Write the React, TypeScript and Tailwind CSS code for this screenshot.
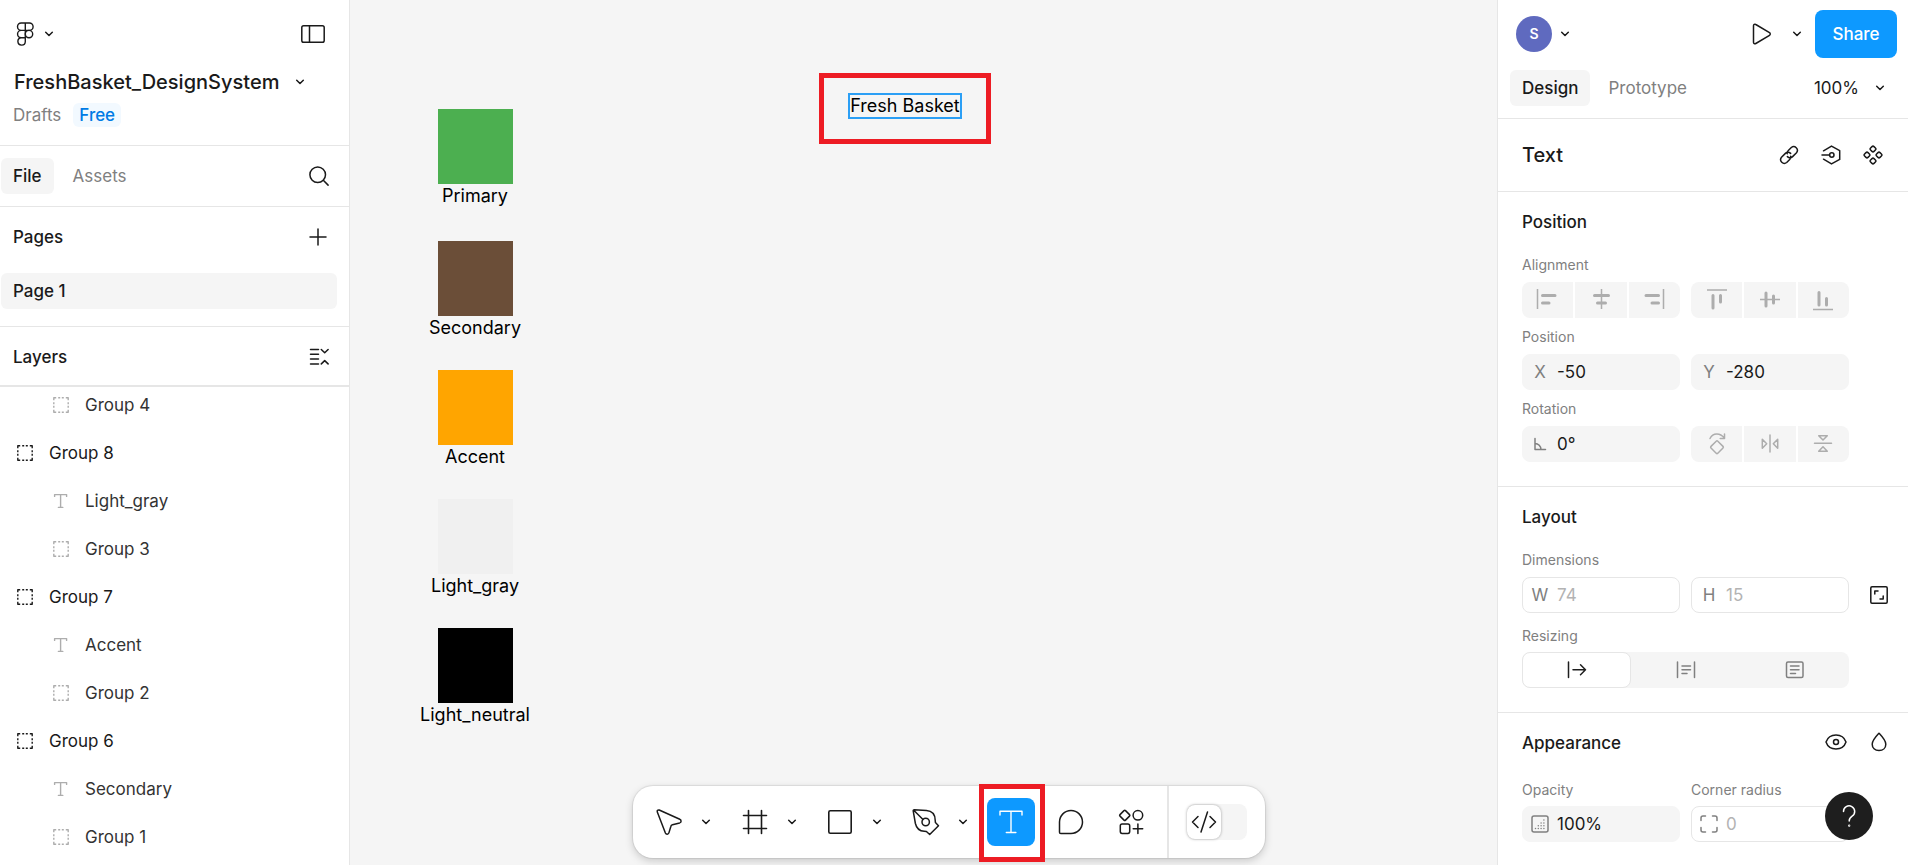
import React from "react";

type IconProps = {
  w: number;
  h: number;
  sw?: number;
  className?: string;
  children: React.ReactNode;
};

function Icon({ w, h, sw = 1.5, className, children }: IconProps) {
  return (
    <svg
      width={w}
      height={h}
      viewBox={`0 0 ${w} ${h}`}
      fill="none"
      stroke="currentColor"
      strokeWidth={sw}
      strokeLinecap="round"
      strokeLinejoin="round"
      className={className}
      aria-hidden="true"
    >
      {children}
    </svg>
  );
}

function Chevron() {
  return (
    <Icon w={10} h={8}>
      <path d="M1.7 2.2 5 5.5l3.3-3.3" />
    </Icon>
  );
}

function GroupIcon() {
  return (
    <Icon w={16} h={16} sw={1.4}>
      <path
        strokeLinecap="butt"
        d="M.8 3.2V.8h2.4M5.2.8h2M8.8.8h2M12.8.8h2.4v2.4M15.2 5.2v2M15.2 8.8v2M15.2 12.8v2.4h-2.4M10.8 15.2h-2M7.2 15.2h-2M3.2 15.2H.8v-2.4M.8 10.8v-2M.8 7.2v-2"
      />
    </Icon>
  );
}

function TextLayerIcon() {
  return (
    <Icon w={16} h={16} sw={1.4}>
      <path d="M1.6 3.4V1.6h12v1.8M7.6 1.6v12.8M5.4 14.4h4.4" />
    </Icon>
  );
}

type Layer = { name: string; kind: "group" | "text"; child: boolean };

const layers: Layer[] = [
  { name: "Group 4", kind: "group", child: true },
  { name: "Group 8", kind: "group", child: false },
  { name: "Light_gray", kind: "text", child: true },
  { name: "Group 3", kind: "group", child: true },
  { name: "Group 7", kind: "group", child: false },
  { name: "Accent", kind: "text", child: true },
  { name: "Group 2", kind: "group", child: true },
  { name: "Group 6", kind: "group", child: false },
  { name: "Secondary", kind: "text", child: true },
  { name: "Group 1", kind: "group", child: true },
];

function LeftPanel() {
  return (
    <aside className="flex w-[350px] shrink-0 flex-col border-r border-[#e6e6e6] bg-white">
      <header className="flex h-[146px] flex-col border-b border-[#e6e6e6]">
        <div className="flex h-[66px] items-center justify-between pt-0.5 pr-6 pl-4">
          <button className="flex items-center gap-2.5" aria-label="Main menu">
            <Icon w={18} h={24} sw={1.4}>
              <path d="M9.3 1H5.2a3.7 3.7 0 0 0 0 7.4h4.1zM9.3 1h4.1a3.7 3.7 0 0 1 0 7.4H9.3zM9.3 8.4H5.2a3.6 3.6 0 0 0 0 7.3h4.1zM5.2 15.7a3.7 3.7 0 1 0 4.1 3.7v-3.7z" />
              <circle cx="13" cy="12.1" r="3.7" />
            </Icon>
            <Chevron />
          </button>
          <button aria-label="Toggle sidebar">
            <Icon w={24} h={18}>
              <rect x=".8" y=".8" width="22.4" height="16.4" rx="1.8" />
              <path d="M8.5 1v16" />
            </Icon>
          </button>
        </div>
        <button className="flex h-8 items-center justify-between pr-[44px] pl-3.5 text-[20px] font-medium">
          FreshBasket_DesignSystem
          <Chevron />
        </button>
        <div className="flex h-[34px] items-center gap-3 pl-[13px] text-[#808080]">
          <span>Drafts</span>
          <span className="rounded-md bg-[#f2f9ff] px-1.5 font-medium text-[#007be5]">Free</span>
        </div>
      </header>

      <nav className="flex h-[61px] items-center border-b border-[#e6e6e6] pr-5 pl-px">
        <button className="h-9 rounded-md bg-[#f5f5f5] px-3 font-medium">File</button>
        <button className="h-9 px-[19px] text-[#808080]">Assets</button>
        <button className="ml-auto" aria-label="Search">
          <Icon w={20} h={20}>
            <circle cx="8.7" cy="8.7" r="7.8" />
            <path d="m14.3 14.3 4.8 4.8" />
          </Icon>
        </button>
      </nav>

      <section className="border-b border-[#e6e6e6] pb-[17px]">
        <div className="mb-1.5 flex h-[60px] items-center justify-between pr-[22px] pl-[13px]">
          <h2 className="font-medium">Pages</h2>
          <button aria-label="Add page">
            <Icon w={18} h={18}>
              <path d="M9 1v16M1 9h16" />
            </Icon>
          </button>
        </div>
        <button className="ml-px flex h-9 w-[336px] items-center rounded-md bg-[#f5f5f5] px-3 font-medium">
          Page 1
        </button>
      </section>

      <div className="flex h-[60px] shrink-0 items-center justify-between border-b-2 border-[#e6e6e6] pt-0.5 pr-5 pl-[13px]">
        <h2 className="font-medium">Layers</h2>
        <button aria-label="Collapse layers">
          <Icon w={20} h={18}>
            <path d="M1.5 1.5h8M1.5 6.3h8M1.5 11.1h8M1.5 15.9h8M12.3 1.5l3.4 3.3 3.4-3.3M12.3 15.9l3.4-3.3 3.4 3.3" />
          </Icon>
        </button>
      </div>

      <div className="min-h-0 flex-1 overflow-hidden">
        <ul className="-mt-1.5">
          {layers.map((l) => (
            <li
              key={l.name}
              className={
                l.child
                  ? "flex h-12 items-center gap-4 pl-[53px] text-[#333]"
                  : "flex h-12 items-center gap-4 pl-[17px]"
              }
            >
              <span className={l.child ? "text-[#adadad]" : ""}>
                {l.kind === "group" ? <GroupIcon /> : <TextLayerIcon />}
              </span>
              {l.name}
            </li>
          ))}
        </ul>
      </div>
    </aside>
  );
}

const swatches = [
  { name: "Primary", place: "top-[109px]", color: "bg-[#4caf50]" },
  { name: "Secondary", place: "top-[241px]", color: "bg-[#6b4e38]" },
  { name: "Accent", place: "top-[370px]", color: "bg-[#ffa500]" },
  { name: "Light_gray", place: "top-[499px]", color: "bg-[#f0f0f0]" },
  { name: "Light_neutral", place: "top-[628px]", color: "bg-black" },
];

const splitTools = [
  {
    name: "Move",
    icon: (
      <Icon w={28} h={28}>
        <path d="M2.3 3.9 10.4 25c.7 1.7 3 1.6 3.5-.1l2-6.6c.2-.8.8-1.4 1.6-1.6l7.2-1.8c1.8-.5 1.8-3 .1-3.6L4.2 2C2.9 1.6 1.8 2.700 2.300 3.900Z" />
      </Icon>
    ),
  },
  {
    name: "Frame",
    icon: (
      <Icon w={28} h={28} sw={1.6}>
        <path d="M7.5 2.5v23M20.5 2.5v23M2.5 7.5h23M2.5 20.5h23" />
      </Icon>
    ),
  },
  {
    name: "Rectangle",
    icon: (
      <Icon w={28} h={28} sw={1.6}>
        <rect x="2.800" y="2.800" width="22.400" height="22.400" rx="1.500" />
      </Icon>
    ),
  },
  {
    name: "Pen",
    icon: (
      <Icon w={28} h={28}>
        <path d="M2.2 1.800 14.500 2.600c6 .5 8.600 4.500 8.700 9.700l.2 2.200 3.100 3.200-8.800 8.800-3.300-3-2.200-.2C7 23 4.500 20.300 3.400 15.500L1.200 2.800c-.1-.6.4-1 1-1ZM2 2.500l9 9" />
        <circle cx="13.7" cy="14" r="3.7" />
      </Icon>
    ),
  },
];

function Toolbar() {
  return (
    <div
      role="toolbar"
      aria-label="Tools"
      className="absolute bottom-[7px] left-[283px] flex h-[72px] items-center rounded-[20px] bg-white pl-3 shadow-[0_0_1px_1px_rgba(0,0,0,0.08),0_3px_8px_rgba(0,0,0,0.18)]"
    >
      <div className="grid w-[342px] grid-cols-4">
        {splitTools.map((t) => (
          <div key={t.name} className="flex items-center">
            <button className="grid size-12 place-items-center" aria-label={t.name}>
              {t.icon}
            </button>
            <button className="grid h-12 w-[26px] place-items-center" aria-label={`${t.name} options`}>
              <Chevron />
            </button>
          </div>
        ))}
      </div>
      <div className="flex items-center gap-3">
        <div className="relative">
          <button className="grid size-12 place-items-center rounded-lg bg-[#0d99ff] text-white" aria-label="Text">
            <Icon w={28} h={28} sw={1.4}>
              <path d="M3 7V3.2h22V7M14 3.2v21.3M9.300 24.500h9.600" />
            </Icon>
          </button>
          <div className="pointer-events-none absolute -top-3.5 -left-2 h-[78px] w-[66px] border-5 border-[#ed1c24]" />
        </div>
        <button className="grid size-12 place-items-center" aria-label="Comment">
          <Icon w={28} h={28}>
            <path d="M14 2.5A11.5 11.5 0 1 1 14 25.5H3.800c-.8 0-1.300-.5-1.300-1.300V14A11.500 11.500 0 0 1 14 2.500Z" />
          </Icon>
        </button>
        <button className="grid size-12 place-items-center" aria-label="Actions">
          <Icon w={28} h={28}>
            <path d="M7 2.600c.5-.5 1-.5 1.500 0l4 4c.5.5.5 1 0 1.500l-4 4c-.5.5-1 .5-1.500 0l-4-4c-.5-.5-.5-1 0-1.500zM20.900 16v9.500M16.200 20.700h9.500" />
            <circle cx="20.900" cy="7.300" r="4.800" />
            <rect x="3.300" y="16" width="9.400" height="9.400" rx="1.800" />
          </Icon>
        </button>
      </div>
      <div className="ml-3 flex h-full items-center border-l-2 border-[#e6e6e6] px-[18px]">
        <button className="flex h-9 w-[60px] items-center rounded-lg bg-[#f5f5f5]" aria-label="Dev mode">
          <span className="grid size-[34px] place-items-center rounded-lg bg-white shadow-[0_0_3px_rgba(0,0,0,0.35)]">
            <Icon w={26} h={24}>
              <path d="m7 6.500-5.500 5.500L7 17.500M19 6.500l5.500 5.500-5.500 5.500M16.500 2 10 22" />
            </Icon>
          </span>
        </button>
      </div>
    </div>
  );
}

function Canvas() {
  return (
    <main className="relative min-w-0 flex-1 overflow-hidden bg-[#f5f5f5]">
      {swatches.map((s) => (
        <figure key={s.name} className={`absolute left-[50px] flex w-[150px] flex-col items-center ${s.place}`}>
          <div className={`size-[75px] ${s.color}`} />
          <figcaption className="text-lg leading-6 text-black">{s.name}</figcaption>
        </figure>
      ))}
      <div className="absolute top-[73px] left-[469px] grid h-[71px] w-[172px] place-items-center border-5 border-[#ed1c24]">
        <span className="mb-1.5 border-2 border-[#2b9ff5] text-lg leading-[22px] text-black">Fresh Basket</span>
      </div>
      <Toolbar />
    </main>
  );
}

function Label({ children, tall }: { children: React.ReactNode; tall?: boolean }) {
  return (
    <div
      className={
        tall
          ? "flex h-[39px] items-center pt-1.5 text-sm text-[#808080]"
          : "flex h-9 items-center pt-0.5 text-sm text-[#808080]"
      }
    >
      {children}
    </div>
  );
}

function Row({ children, end }: { children: React.ReactNode; end?: React.ReactNode }) {
  return (
    <div className="flex items-center">
      <div className="grid flex-1 grid-cols-2 gap-[11px]">{children}</div>
      <div className="grid w-[59px] place-items-center">{end}</div>
    </div>
  );
}

function Segments({ items }: { items: { name: string; icon: React.ReactNode }[] }) {
  return (
    <div className="grid h-9 grid-cols-3 gap-0.5 overflow-hidden rounded-lg text-[#adadad]">
      {items.map((i) => (
        <button key={i.name} aria-label={i.name} className="grid place-items-center bg-[#f5f5f5]">
          {i.icon}
        </button>
      ))}
    </div>
  );
}

function Field({
  name,
  prefix,
  value,
  outlined,
}: {
  name: string;
  prefix: React.ReactNode;
  value: string;
  outlined?: boolean;
}) {
  return (
    <label
      className={
        outlined
          ? "flex h-9 items-center rounded-lg border border-[#e6e6e6] text-[#b3b3b3]"
          : "flex h-9 items-center rounded-lg border border-[#f5f5f5] bg-[#f5f5f5]"
      }
    >
      <span className="grid w-[34px] shrink-0 place-items-center text-[#808080]">{prefix}</span>
      <input aria-label={name} defaultValue={value} className="w-full min-w-0 bg-transparent outline-none" />
    </label>
  );
}

function AlignIcon({ line, bars }: { line: string; bars: string }) {
  return (
    <Icon w={24} h={24}>
      <path strokeLinecap="butt" d={line} />
      <path strokeWidth="3" d={bars} />
    </Icon>
  );
}

const horizontalAlign = [
  { name: "Align left", icon: <AlignIcon line="M1.5 1v20" bars="M6.5 7.5H19M6.5 15h6.5" /> },
  { name: "Align horizontal centers", icon: <AlignIcon line="M12.5 1v20" bars="M5.5 7.5h14M8.5 15h8" /> },
  { name: "Align right", icon: <AlignIcon line="M21.5 1v20" bars="M4 7.5h12.5M10 15h6.5" /> },
];

const verticalAlign = [
  { name: "Align top", icon: <AlignIcon line="M2 2h20" bars="M8 7.5V20M15.5 7.5V14" /> },
  { name: "Align vertical centers", icon: <AlignIcon line="M2 11.5h20" bars="M8 5v13M15.5 8v7" /> },
  { name: "Align bottom", icon: <AlignIcon line="M2 21.5h20" bars="M8 4.5v12.5M15.5 10.5V17" /> },
];

const transforms = [
  {
    name: "Rotate 90 degrees",
    icon: (
      <Icon w={24} h={24}>
        <path d="M5 6.500C8 .5 15 .5 19.300 6M19.500 2v4.500h-4.300M11.200 9.200c.5-.5 1.100-.5 1.600 0l5.200 5.200c.5.5.5 1.100 0 1.600l-5.200 5.200c-.5.5-1.100.5-1.600 0L6 16c-.5-.5-.5-1.100 0-1.600z" />
      </Icon>
    ),
  },
  {
    name: "Flip horizontal",
    icon: (
      <Icon w={24} h={24}>
        <path d="M12 3v17M4.300 7.300v9L8.700 11.800zM19.700 7.300v9L15.300 11.800z" />
      </Icon>
    ),
  },
  {
    name: "Flip vertical",
    icon: (
      <Icon w={24} h={24}>
        <path d="M3.500 11.300h17M7.700 3.700h8.600L12 8zM7.700 19.300h8.600L12 14.800z" />
      </Icon>
    ),
  },
];

function Section({ title, actions, children }: { title: string; actions?: React.ReactNode; children: React.ReactNode }) {
  return (
    <section className="border-b border-[#e6e6e6] pt-3 pb-6 pl-6">
      <div className="mb-1.5 flex h-9 items-center justify-between">
        <h2 className="font-medium">{title}</h2>
        {actions}
      </div>
      {children}
    </section>
  );
}

const componentDots = [
  { cx: 10, cy: 4 },
  { cx: 4, cy: 10 },
  { cx: 16, cy: 10 },
  { cx: 10, cy: 16 },
];

function RightPanel() {
  return (
    <aside className="flex w-[411px] shrink-0 flex-col overflow-hidden border-l border-[#e6e6e6] bg-white">
      <header className="shrink-0 border-b border-[#e6e6e6] pt-2.5 pb-3">
        <div className="flex h-12 items-center pr-[11px] pl-[18px]">
          <button className="flex items-center gap-2" aria-label="Account">
            <span className="grid size-9 place-items-center rounded-full bg-[#5f6abf] text-sm font-semibold text-white">
              S
            </span>
            <Chevron />
          </button>
          <button className="mr-5 ml-auto" aria-label="Present">
            <Icon w={20} h={22}>
              <path d="M1.5 2.800v16.400c0 1.300 1.200 2 2.300 1.300l13.700-8.200c1-.6 1-2 0-2.600L3.800 1.500C2.700.8 1.500 1.500 1.500 2.800Z" />
            </Icon>
          </button>
          <button className="mr-[13px]" aria-label="Present options">
            <Chevron />
          </button>
          <button className="h-12 w-[82px] rounded-lg bg-[#0d99ff] font-medium text-white">Share</button>
        </div>
        <div className="mt-3 flex h-9 items-center pr-[23px] pl-3">
          <button className="h-9 rounded-md bg-[#f5f5f5] px-3 font-medium">Design</button>
          <button className="h-9 px-[18px] text-[#808080]">Prototype</button>
          <button className="ml-auto flex items-center gap-4">
            100%
            <Chevron />
          </button>
        </div>
      </header>

      <div className="flex h-[73px] shrink-0 items-center justify-between border-b border-[#e6e6e6] pr-[25px] pl-6">
        <h1 className="text-[20px] font-medium">Text</h1>
        <div className="flex gap-[22px]">
          <button aria-label="Add link">
            <Icon w={20} h={20}>
              <path d="M8.400 11.600a3.700 3.700 0 0 0 5.200 0l3.900-3.900a3.700 3.700 0 0 0-5.200-5.200L9.300 5.500a3.600 3.600 0 0 0-1 3.200M11.600 8.400a3.700 3.700 0 0 0-5.200 0l-3.900 3.900a3.700 3.700 0 0 0 5.200 5.200l3-3a3.600 3.600 0 0 0 1-3.200" />
            </Icon>
          </button>
          <button aria-label="Variable mode">
            <Icon w={20} h={20}>
              <path d="M2.500 5.800 10.500 1.100l8.200 4.500v8.800l-8.200 4.500-8-4.700M1 10h7.500" />
              <circle cx="10.800" cy="10" r="2.200" />
            </Icon>
          </button>
          <button aria-label="Create component">
            <Icon w={20} h={20}>
              {componentDots.map((d) => (
                <rect
                  key={`${d.cx}-${d.cy}`}
                  x={d.cx - 2.4}
                  y={d.cy - 2.4}
                  width="4.8"
                  height="4.8"
                  rx="1.4"
                  transform={`rotate(45 ${d.cx} ${d.cy})`}
                />
              ))}
            </Icon>
          </button>
        </div>
      </div>

      <Section title="Position">
        <Label>Alignment</Label>
        <Row>
          <Segments items={horizontalAlign} />
          <Segments items={verticalAlign} />
        </Row>
        <Label>Position</Label>
        <Row>
          <Field name="X position" prefix="X" value="-50" />
          <Field name="Y position" prefix="Y" value="-280" />
        </Row>
        <Label>Rotation</Label>
        <Row>
          <Field
            name="Rotation"
            value="0°"
            prefix={
              <Icon w={14} h={14}>
                <path d="M2 1.500V12.500H12.500M2 6.500a6 6 0 0 1 6 6" />
              </Icon>
            }
          />
          <Segments items={transforms} />
        </Row>
      </Section>

      <Section title="Layout">
        <Label>Dimensions</Label>
        <Row
          end={
            <button aria-label="Lock aspect ratio">
              <Icon w={18} h={18}>
                <rect x=".8" y=".8" width="16.400" height="16.400" rx="1.200" />
                <path d="M4.800 8V5H8M13.200 10v3H10" />
              </Icon>
            </button>
          }
        >
          <Field name="Width" prefix="W" value="74" outlined />
          <Field name="Height" prefix="H" value="15" outlined />
        </Row>
        <Label tall>Resizing</Label>
        <div className="mr-[59px] grid h-9 grid-cols-3 rounded-lg bg-[#f5f5f5] text-[#808080]">
          <button
            aria-label="Auto width"
            className="grid place-items-center rounded-lg border border-[#e6e6e6] bg-white text-[#1e1e1e]"
          >
            <Icon w={20} h={18}>
              <path d="M1.500 1v15.500M6 8.800h12.500M13.500 3.800l5 5-5 5" />
            </Icon>
          </button>
          <button aria-label="Auto height" className="grid place-items-center">
            <Icon w={20} h={18}>
              <path d="M1.500 1v15.500M18.500 1v15.500M6 5h8.500M6 8.700h8.500M6 12.400h5" />
            </Icon>
          </button>
          <button aria-label="Fixed size" className="grid place-items-center">
            <Icon w={20} h={18}>
              <rect x="1.500" y="1" width="16.500" height="15.500" rx="1.500" />
              <path d="M5.500 5h8.500M5.500 8.700h8.500M5.500 12.400h5" />
            </Icon>
          </button>
        </div>
      </Section>

      <Section
        title="Appearance"
        actions={
          <div className="flex items-center gap-[23px] pr-5 pb-0.5">
            <button aria-label="Toggle visibility">
              <Icon w={22} h={16}>
                <path d="M1 8c1.500-4.300 5.200-7 10-7s8.500 2.700 10 7c-1.500 4.300-5.200 7-10 7S2.500 12.300 1 8Z" />
                <circle cx="11" cy="8" r="2.500" />
              </Icon>
            </button>
            <button aria-label="Blend mode">
              <Icon w={18} h={20}>
                <path d="M9 1.200c3 3.200 6.800 7.200 6.800 11 0 3.700-2.700 6.400-6.800 6.400s-6.800-2.700-6.800-6.400c0-3.800 3.800-7.800 6.800-11Z" />
              </Icon>
            </button>
          </div>
        }
      >
        <Row>
          <Label tall>Opacity</Label>
          <Label tall>Corner radius</Label>
        </Row>
        <Row>
          <Field
            name="Opacity"
            value="100%"
            prefix={
              <Icon w={18} h={18}>
                <rect x="1" y="1" width="16" height="16" rx="2" />
                <path d="M4.500 13.500h0M7.300 13.500h0M10.100 13.500h0M12.900 13.500h0M7.300 10.700h0M10.100 10.700h0M12.900 10.700h0M10.100 7.900h0M12.900 7.900h0M12.900 5.100h0" />
              </Icon>
            }
          />
          <Field
            name="Corner radius"
            value="0"
            outlined
            prefix={
              <Icon w={18} h={18}>
                <path d="M1 5.500V3a2 2 0 0 1 2-2h2.500M12.500 1H15a2 2 0 0 1 2 2v2.500M17 12.500V15a2 2 0 0 1-2 2h-2.500M5.500 17H3a2 2 0 0 1-2-2v-2.500" />
              </Icon>
            }
          />
        </Row>
      </Section>
    </aside>
  );
}

export default function App() {
  return (
    <div className="relative flex h-screen overflow-hidden bg-white font-['Inter',sans-serif] text-[17px] leading-6 text-[#1a1a1a]">
      <LeftPanel />
      <Canvas />
      <RightPanel />
      <button
        aria-label="Help"
        className="absolute right-[35px] bottom-[25px] grid size-12 place-items-center rounded-full bg-[#1e1e1e] text-white"
      >
        <Icon w={16} h={24}>
          <path d="M2.500 7.500a5.600 5.600 0 1 1 8.600 4.700C9 13.600 8.200 14.500 8.200 17" />
          <circle cx="8.200" cy="21.700" r=".4" />
        </Icon>
      </button>
    </div>
  );
}
